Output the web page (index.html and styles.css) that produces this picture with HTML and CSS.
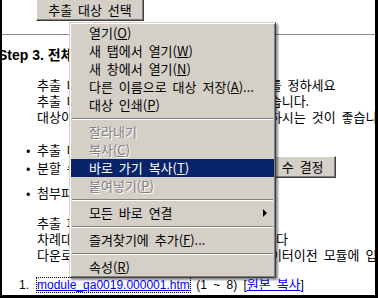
FILE: index.html
```html
<!DOCTYPE html>
<html>
	<head>
		<title>추출 대상 선택</title><meta charset="utf-8">
		<link rel="stylesheet" href="styles.css">
	</head>
	<body>
		<div class="frame">
			<div class="toolbar"><button class="btn btnTop">추출 대상 선택</button></div>
			<hr class="rule">
			<h3 class="step">Step 3. 전체 추출 설정</h3>
			<p class="desc">추출 대상 파일의 최대 크기 및 분할 개수를 정하세요<br>추출 대상 파일이 크면 나눠 저장할 수 있습니다.<br>대상이 많은 경우에는 여러 파일들로 분할하시는 것이 좋습니다</p>
			<ul class="opts">
				<li>추출 대상 파일 크기 설정</li>
				<li>분할 수 입력 후 아래의 단추를 눌러 <button class="btn">분할 수 결정</button></li>
				<li>첨부파일 포함 여부 선택</li>
			</ul>
			<p class="desc">추출 파일은 아래 목록에 표시됩니다<br>차례대로 원본 복사를 클릭하여서 저장합니다<br>다운로드한 파일은 압축을 해제한 후에 데이터이전 모듈에 입력하세요</p>
			<ol class="files">
				<li><a href="#" class="focus">module_qa0019.000001.htm</a> (1 ~ 8) [<a href="#" class="ko">원본 복사</a>]</li>
			</ol>

			<div class="menu">
				<div class="item">열기(<u>O</u>)</div>
				<div class="item">새 탭에서 열기(<u>W</u>)</div>
				<div class="item">새 창에서 열기(<u>N</u>)</div>
				<div class="item">다른 이름으로 대상 저장(<u>A</u>)...</div>
				<div class="item">대상 인쇄(<u>P</u>)</div>
				<div class="sep"></div>
				<div class="item off">잘라내기</div>
				<div class="item off">복사(<u>C</u>)</div>
				<div class="item on">바로 가기 복사(<u>T</u>)</div>
				<div class="item off">붙여넣기(<u>P</u>)</div>
				<div class="sep"></div>
				<div class="item sub">모든 바로 연결</div>
				<div class="sep"></div>
				<div class="item">즐겨찾기에 추가(<u>F</u>)...</div>
				<div class="sep"></div>
				<div class="item">속성(<u>R</u>)</div>
			</div>
		</div>
	</body>
</html>
```

FILE: styles.css
```css
body {margin: 0; background-color: #000; font-family: "Noto Sans CJK KR", sans-serif; font-size: 13px; color: #000;}
.frame {position: relative; width: 378px; height: 298px; box-sizing: border-box; border-left: 2px solid #000; border-right: 3px solid #000; border-bottom: 3px solid #000; background-color: #fff; overflow: hidden; word-spacing: 3px;}

.toolbar {height: 20px; padding-left: 34px;}
.btn {font-family: "Noto Sans CJK KR", sans-serif; font-size: 13px; word-spacing: 3px; height: 22px; padding: 0 11px; line-height: 18px; background-color: #d4d0c8; color: #000; border: 1px solid; border-color: #fff #404040 #404040 #fff; box-shadow: inset -1px -1px #808080;}
.btnTop {margin-top: -2px; width: 108px;}

.rule {margin: 14px 0 0; height: 0; border: 0; border-top: 1px solid #8c8c8c;}
.step {margin: 11px 0 0 -4px; font-family: "Liberation Sans", "Noto Sans CJK KR", sans-serif; font-size: 14px; line-height: 18px; word-spacing: 0;}

.desc {margin: 13px 0 0 35px; line-height: 16px; white-space: nowrap;}

.opts {margin: 15px 0 0; padding: 0; list-style: none;}
.opts li {display: flex; align-items: center; padding-left: 24px; min-height: 16px; white-space: nowrap;}
.opts li::before {content: "•"; width: 11px; flex: none;}
.opts li:nth-child(2) {margin-top: -3px;}
.opts li:nth-child(3) {margin-top: 5px;}

.files {margin: 13px 0 0; padding: 0; list-style: none; font-family: "Liberation Sans", "Noto Sans CJK KR", sans-serif; font-size: 12px;}
.files li {padding-left: 17px; line-height: 16px; white-space: nowrap;}
.files li::before {content: "1."; display: inline-block; width: 18px;}
a {color: #0000ff;}
.focus {outline: 1px dotted #000;}
.ko {font-family: "Noto Sans CJK KR", sans-serif; font-size: 13px;}

.menu {position: absolute; left: 67px; top: 22px; width: 207px; box-sizing: border-box; padding: 1px; background-color: #d4d0c8; border: 1px solid; border-color: #d4d0c8 #404040 #404040 #d4d0c8; box-shadow: inset 1px 1px #fff, inset -1px -1px #808080, 2px 2px 2px rgba(0,0,0,0.45); word-spacing: 3px;}
.item {position: relative; height: 18px; line-height: 18px; padding-left: 18px; white-space: nowrap;}
.item.on {background-color: #0a246a; color: #fff;}
.item.off {color: #808080; text-shadow: 1px 1px #fff;}
.item.sub::after {content: ""; position: absolute; right: 7px; top: 5px; border-left: 4px solid #000; border-top: 4px solid transparent; border-bottom: 4px solid transparent;}
.sep {height: 0; margin: 4px 1px 3px; border-top: 1px solid #808080; border-bottom: 1px solid #fff;}
```
